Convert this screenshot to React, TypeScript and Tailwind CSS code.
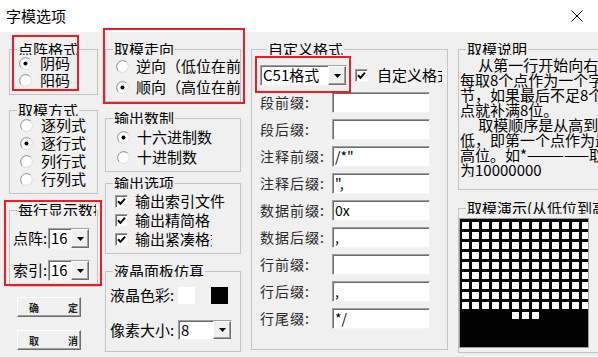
import React from 'react';

const sunken =
  'bg-white border border-t-[#a0a0a0] border-l-[#a0a0a0] border-r-[#f4f4f4] border-b-[#f4f4f4] shadow-[inset_1px_1px_0_#6d6d6d]';

interface GroupProps {
  title: string;
  className?: string;
  legendClassName?: string;
  children: React.ReactNode;
}

function Group({ title, className = '', legendClassName = '', children }: GroupProps) {
  return (
    <fieldset className={`min-w-0 shrink-0 border border-[#c4c4c4] ${className}`}>
      <legend
        className={`ml-[7px] px-[1px] text-[15px] leading-[12px] whitespace-nowrap overflow-hidden ${legendClassName}`}
      >
        {title}
      </legend>
      {children}
    </fieldset>
  );
}

function Radio({ checked }: { checked?: boolean }) {
  return (
    <svg width="13" height="13" viewBox="0 0 13 13" className="shrink-0">
      <circle cx="6.5" cy="6.5" r="6" fill="#fff" />
      <path d="M2.26 10.74 A6 6 0 0 1 10.74 2.26" fill="none" stroke="#8a8a8a" />
      <path d="M10.74 2.26 A6 6 0 0 1 2.26 10.74" fill="none" stroke="#dadada" />
      {checked && <circle cx="6.5" cy="6.5" r="2" fill="#000" />}
    </svg>
  );
}

function Check() {
  return (
    <span className={`w-[13px] h-[13px] shrink-0 flex items-center justify-center ${sunken}`}>
      <svg width="9" height="9" viewBox="0 0 9 9">
        <path d="M1 4.2 L3.5 6.8 L8 1.6" stroke="#000" strokeWidth="2" fill="none" />
      </svg>
    </span>
  );
}

function DropButton() {
  return (
    <span className="w-[18px] shrink-0 flex items-center justify-center bg-[#f0f0f0] border border-t-white border-l-white border-r-[#6d6d6d] border-b-[#6d6d6d] shadow-[inset_-1px_-1px_0_#a0a0a0]">
      <svg width="7" height="4" viewBox="0 0 7 4">
        <path d="M0 0H7L3.5 4Z" fill="#000" />
      </svg>
    </span>
  );
}

function Combo({ value, className }: { value: string; className: string }) {
  return (
    <div className={`flex ${sunken} ${className}`}>
      <span className="flex-1 pl-[2px] text-[15px] leading-[18px] overflow-hidden whitespace-nowrap">{value}</span>
      <DropButton />
    </div>
  );
}

function Button({ a, b }: { a: string; b: string }) {
  return (
    <div className="ml-[8px] w-[64px] h-[20px] flex items-center pl-[11px] text-[10px] font-bold text-[#222] bg-[#f0f0f0] border border-t-white border-l-white border-r-[#6d6d6d] border-b-[#6d6d6d] shadow-[inset_-1px_-1px_0_#a0a0a0]">
      <span>{a}</span>
      <span className="ml-[29px]">{b}</span>
    </div>
  );
}

const fields = [
  ['段前缀:', ''],
  ['段后缀:', ''],
  ['注释前缀:', '/*"'],
  ['注释后缀:', '",'],
  ['数据前缀:', '0x'],
  ['数据后缀:', ','],
  ['行前缀:', ''],
  ['行后缀:', ','],
  ['行尾缀:', '*/'],
];

const notes = [
  '\u3000 从第一行开始向右每取',
  '每取8个点作为一个字节',
  '节，如果最后不足8个点',
  '点就补满8位。',
  '\u3000 取模顺序是从高到低',
  '低，即第一个点作为最高',
  '高位。如*—————取',
  '为10000000',
];

export default function App() {
  const rows = Array.from({ length: 13 }, (_, i) => i);
  const cols = Array.from({ length: 13 }, (_, j) => j);

  return (
    <div className="relative w-[598px] h-[357px] overflow-hidden bg-[#f0f0f0] text-black font-['Noto_Sans_CJK_SC',sans-serif]">
      <div className="h-[32px] bg-white flex items-center justify-between pl-[6px]">
        <span className="text-[15px]">字模选项</span>
        <svg className="mr-[15px]" width="12" height="12" viewBox="0 0 12 12">
          <path d="M0.5 0.5L11.5 11.5M11.5 0.5L0.5 11.5" stroke="#000" strokeWidth="1" />
        </svg>
      </div>

      <div className="flex pl-[9px] pt-[11px]">
        {/* column 1 */}
        <div className="w-[89px] shrink-0 flex flex-col">
          <Group title="点阵格式" className="pb-[5px]">
            <div className="pl-[9px] text-[15px]">
              <div className="h-[17px] flex items-center gap-[8px]"><Radio checked />阴码</div>
              <div className="h-[17px] flex items-center gap-[8px]"><Radio />阳码</div>
            </div>
          </Group>
          <Group title="取模方式" className="mt-[9px] pb-[5px]">
            <div className="pl-[10px] text-[15px]">
              <div className="h-[18px] flex items-center gap-[8px]"><Radio />逐列式</div>
              <div className="h-[18px] flex items-center gap-[8px]"><Radio checked />逐行式</div>
              <div className="h-[18px] flex items-center gap-[8px]"><Radio />列行式</div>
              <div className="h-[18px] flex items-center gap-[8px]"><Radio />行列式</div>
            </div>
          </Group>
          <Group title="每行显示数据" className="mt-[10px] pb-[5px]" legendClassName="max-w-[79px]">
            <div className="pt-[12px] pl-[3px] text-[15px]">
              <div className="h-[21px] flex items-center">
                <span className="w-[35px]">点阵:</span>
                <Combo value="16" className="w-[42px] h-[21px]" />
              </div>
              <div className="h-[21px] mt-[11px] flex items-center">
                <span className="w-[35px]">索引:</span>
                <Combo value="16" className="w-[42px] h-[21px]" />
              </div>
            </div>
          </Group>
          <div className="mt-[10px]">
            <Button a="确" b="定" />
          </div>
          <div className="mt-[13px]">
            <Button a="取" b="消" />
          </div>
        </div>

        {/* column 2 */}
        <div className="ml-[7px] w-[136px] shrink-0 flex flex-col">
          <Group title="取模走向" className="pt-[1px] pb-[3px]">
            <div className="pl-[10px] text-[15px] overflow-hidden whitespace-nowrap">
              <div className="h-[21px] flex items-center gap-[7px]"><Radio />逆向（低位在前）</div>
              <div className="h-[21px] flex items-center gap-[7px]"><Radio checked />顺向（高位在前）</div>
            </div>
          </Group>
          <Group title="输出数制" className="mt-[10px] pb-[4px]">
            <div className="pt-[3px] pl-[11px] text-[15px]">
              <div className="h-[20px] flex items-center gap-[7px]"><Radio checked />十六进制数</div>
              <div className="h-[20px] flex items-center gap-[7px]"><Radio />十进制数</div>
            </div>
          </Group>
          <Group title="输出选项" className="mt-[5px] pb-[4px]">
            <div className="pt-[3px] pl-[9px] text-[15px] whitespace-nowrap">
              <div className="h-[19px] flex items-center gap-[7px]"><Check />输出索引文件</div>
              <div className="h-[19px] w-[95px] overflow-hidden flex items-center gap-[7px]"><Check />输出精简格式</div>
              <div className="h-[19px] w-[97px] overflow-hidden flex items-center gap-[7px]"><Check />输出紧凑格式</div>
            </div>
          </Group>
          <Group title="液晶面板仿真" className="mt-[11px] pb-[11px]">
            <div className="pt-[10px] pl-[4px] text-[15px]">
              <div className="h-[17px] flex items-center">
                <span className="w-[68px]">液晶色彩:</span>
                <span className="w-[17px] h-[17px] bg-white" />
                <span className="ml-[16px] w-[17px] h-[17px] bg-black" />
              </div>
              <div className="mt-[16px] h-[20px] flex items-center">
                <span className="w-[68px]">像素大小:</span>
                <Combo value="8" className="w-[54px] h-[20px]" />
              </div>
            </div>
          </Group>
        </div>

        {/* column 3 */}
        <div className="ml-[10px] w-[197px] shrink-0">
          <Group title="自定义格式" className="pl-[8px] pb-[20px]">
            <div className="mt-[10px] h-[21px] flex items-center">
              <Combo value="C51格式" className="w-[87px] h-[21px]" />
              <span className="ml-[8px]"><Check /></span>
              <span className="ml-[9px] w-[65px] overflow-hidden whitespace-nowrap text-[15px]">自定义格式</span>
            </div>
            {fields.map(([label, value]) => (
              <div key={label} className="mt-[6px] h-[21px] flex items-center">
                <span className="w-[72px] text-[14px] tracking-[1px] text-[#2a2a2a]">{label}</span>
                <span className={`w-[98px] h-[21px] pl-[2px] text-[14px] leading-[19px] ${sunken}`}>{value}</span>
              </div>
            ))}
          </Group>
        </div>

        {/* column 4 */}
        <div className="ml-[10px] w-[150px] shrink-0 flex flex-col">
          <Group title="取模说明" className="pb-[12px]">
            <div className="mt-[2px] pl-[1px] text-[15px] leading-[15px] whitespace-nowrap overflow-hidden">
              {notes.map((line) => (
                <div key={line}>{line}</div>
              ))}
            </div>
          </Group>
          <Group title="取模演示(从低位到高位)" className="mt-[12px] pb-[4px]">
            <div className="mt-[4px] w-[130px] border border-[#a0a0a0]">
              <div className="w-[128px] h-[128px] bg-black overflow-hidden pt-[3px] pl-[2px] flex flex-col gap-[3px]">
                {rows.map((i) => (
                  <div key={i} className="flex gap-[3px]">
                    {cols.map((j) => (
                      <span
                        key={j}
                        className={`w-[7px] h-[7px] shrink-0 ${
                          i < 9 || (i === 9 && j >= 5 && j <= 7) ? 'bg-white' : 'bg-black'
                        }`}
                      />
                    ))}
                  </div>
                ))}
              </div>
            </div>
          </Group>
        </div>
      </div>

      {/* red annotation boxes */}
      <div className="absolute left-[12px] top-[35px] w-[67px] h-[56px] border-2 border-[#ee1d23]" />
      <div className="absolute left-[103px] top-[28px] w-[142px] h-[76px] border-2 border-[#ee1d23]" />
      <div className="absolute left-[4px] top-[200px] w-[98px] h-[86px] border-2 border-[#ee1d23]" />
      <div className="absolute left-[255px] top-[56px] w-[96px] h-[37px] border-2 border-[#ee1d23]" />
    </div>
  );
}
